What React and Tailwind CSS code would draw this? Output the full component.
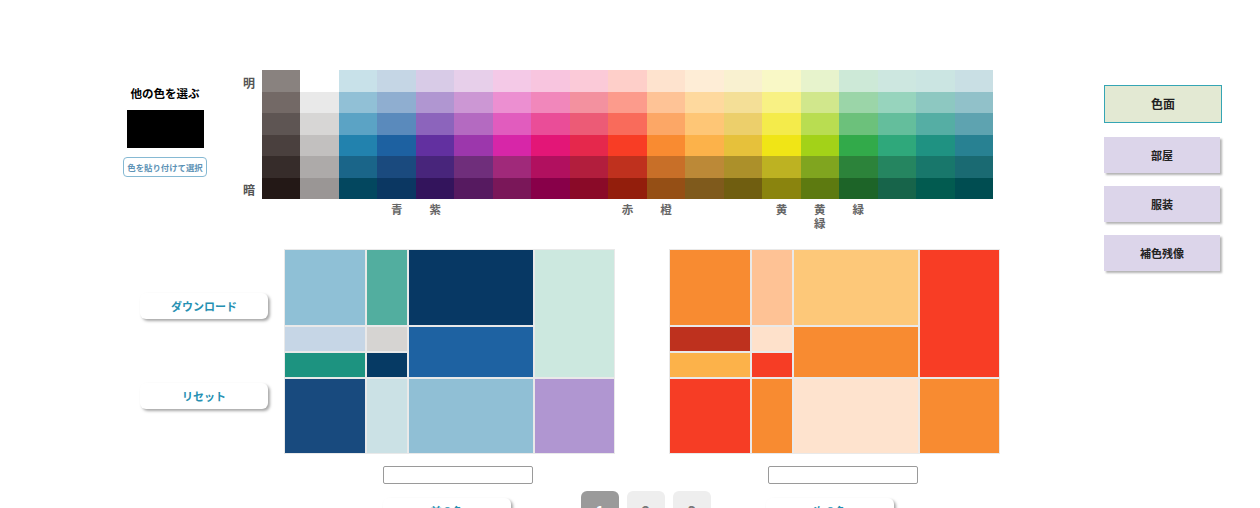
const palette = [
  ["bg-[#89827f]", "bg-[#736966]", "bg-[#5e5553]", "bg-[#4a403e]", "bg-[#362c2a]", "bg-[#231816]"],
  ["bg-[#ffffff]", "bg-[#e9e9e9]", "bg-[#d7d6d5]", "bg-[#c2c0bf]", "bg-[#adaaa9]", "bg-[#9a9695]"],
  ["bg-[#c8e1e9]", "bg-[#91c0d6]", "bg-[#5ba3c5]", "bg-[#2282ae]", "bg-[#1a6589]", "bg-[#03475f]"],
  ["bg-[#c5d6e5]", "bg-[#8faed0]", "bg-[#5a8abc]", "bg-[#1d61a1]", "bg-[#1a4a7e]", "bg-[#0b3762]"],
  ["bg-[#d8cbe7]", "bg-[#b096d1]", "bg-[#8c64bc]", "bg-[#6230a0]", "bg-[#48257b]", "bg-[#33145c]"],
  ["bg-[#e7cfea]", "bg-[#cc97d4]", "bg-[#b46ac1]", "bg-[#9c37ac]", "bg-[#6f2e7b]", "bg-[#561a60]"],
  ["bg-[#f4c9e7]", "bg-[#ec8fd1]", "bg-[#e15cbe]", "bg-[#d726a8]", "bg-[#a0297a]", "bg-[#7a1759]"],
  ["bg-[#f8c5df]", "bg-[#f187bb]", "bg-[#ea4d98]", "bg-[#e31677]", "bg-[#b1105f]", "bg-[#880049]"],
  ["bg-[#fbcad8]", "bg-[#f3919f]", "bg-[#ec5b76]", "bg-[#e5284c]", "bg-[#b21e3d]", "bg-[#8a0a28]"],
  ["bg-[#fecfc9]", "bg-[#fc9b8c]", "bg-[#f96b5b]", "bg-[#f83d25]", "bg-[#bf311e]", "bg-[#931e0c]"],
  ["bg-[#fee3ce]", "bg-[#fec396]", "bg-[#fca766]", "bg-[#f98b31]", "bg-[#c86f28]", "bg-[#954f15]"],
  ["bg-[#feedd6]", "bg-[#fed99e]", "bg-[#fec676]", "bg-[#fcb24a]", "bg-[#bc8937]", "bg-[#7f5a1c]"],
  ["bg-[#f9f1d0]", "bg-[#f4df97]", "bg-[#eccf6b]", "bg-[#e6c13b]", "bg-[#ac902a]", "bg-[#705e10]"],
  ["bg-[#f9f8c6]", "bg-[#f8f184]", "bg-[#f4eb4b]", "bg-[#f0e516]", "bg-[#bdb222]", "bg-[#8a840e]"],
  ["bg-[#e7f3cc]", "bg-[#d1e78c]", "bg-[#b9dd51]", "bg-[#a3d218]", "bg-[#80a51f]", "bg-[#5d7a10]"],
  ["bg-[#cde9d7]", "bg-[#9bd5a8]", "bg-[#6cc17b]", "bg-[#32aa4a]", "bg-[#2c833a]", "bg-[#1d6428]"],
  ["bg-[#cde7e0]", "bg-[#97d4bd]", "bg-[#64be9c]", "bg-[#2fa87b]", "bg-[#258560]", "bg-[#17644a]"],
  ["bg-[#cbe5e2]", "bg-[#8dc8c1]", "bg-[#55aea4]", "bg-[#1f9282]", "bg-[#18776b]", "bg-[#025b50]"],
  ["bg-[#c9dfe4]", "bg-[#91c1c9]", "bg-[#5ea3b0]", "bg-[#288192]", "bg-[#1a6a72]", "bg-[#004d51]"],
];

const hueLabels = [
  { cls: "col-start-4", text: ["青"] },
  { cls: "col-start-5", text: ["紫"] },
  { cls: "col-start-10", text: ["赤"] },
  { cls: "col-start-11", text: ["橙"] },
  { cls: "col-start-14", text: ["黄"] },
  { cls: "col-start-15", text: ["黄", "緑"] },
  { cls: "col-start-16", text: ["緑"] },
];

const leftTree = [
  "col-start-1 row-start-1 bg-[#8fc0d6]",
  "col-start-1 row-start-2 bg-[#c6d6e6]",
  "col-start-1 row-start-3 bg-[#1d9380]",
  "col-start-1 row-start-4 bg-[#184a7e]",
  "col-start-2 row-start-1 bg-[#52ae9f]",
  "col-start-2 row-start-2 bg-[#d6d4d2]",
  "col-start-2 row-start-3 bg-[#063a64]",
  "col-start-2 row-start-4 bg-[#cbe1e5]",
  "col-start-3 row-start-1 bg-[#073864]",
  "col-start-3 row-start-2 row-span-2 bg-[#1e62a2]",
  "col-start-3 row-start-4 bg-[#90bfd5]",
  "col-start-4 row-start-1 row-span-3 bg-[#cce8df]",
  "col-start-4 row-start-4 bg-[#b096d1]",
];

const rightTree = [
  "col-start-1 row-start-1 bg-[#f88b31]",
  "col-start-1 row-start-2 bg-[#be311e]",
  "col-start-1 row-start-3 bg-[#fcb24a]",
  "col-start-1 row-start-4 bg-[#f63d25]",
  "col-start-2 row-start-1 bg-[#fec295]",
  "col-start-2 row-start-2 bg-[#fee1cb]",
  "col-start-2 row-start-3 bg-[#f63d25]",
  "col-start-2 row-start-4 bg-[#f88b31]",
  "col-start-3 row-start-1 bg-[#fdc879]",
  "col-start-3 row-start-2 row-span-2 bg-[#f88b31]",
  "col-start-3 row-start-4 bg-[#fee3ce]",
  "col-start-4 row-start-1 row-span-3 bg-[#f83d25]",
  "col-start-4 row-start-4 bg-[#f88b31]",
];

function Treemap({ cells }) {
  return (
    <div className="grid grid-cols-[80px_40px_124px_79px] grid-rows-[75px_24px_24px_74px] gap-[2px] p-[1px] bg-[#e9e9e9] w-[331px] h-[205px]">
      {cells.map((c, i) => (
        <div key={i} className={c} />
      ))}
    </div>
  );
}

function WhiteButton({ children, className }) {
  return (
    <button
      className={
        "w-[128px] h-[26px] rounded-[6px] bg-white shadow-[2px_2px_3px_rgba(0,0,0,0.35)] text-[11px] font-bold text-[#2590b2] leading-none " +
        className
      }
    >
      {children}
    </button>
  );
}

function SideButton({ children, className }) {
  return (
    <button
      className={
        "w-[116px] h-[36px] bg-[#dcd5ea] shadow-[2px_2px_2px_rgba(0,0,0,0.3)] text-[11px] font-bold text-[#222] leading-none " +
        className
      }
    >
      {children}
    </button>
  );
}

export default function App() {
  return (
    <div className="w-[1260px] h-[508px] overflow-hidden bg-white flex font-['Noto_Sans_CJK_JP','Noto_Sans',sans-serif]">
      <div className="w-[1104px] shrink-0 flex flex-col">
        {/* top: picker + palette */}
        <div className="h-[249px] pt-[70px] flex shrink-0">
          <div className="ml-[123px] w-[84px] pt-[14px] flex flex-col items-center">
            <div className="text-[11.5px] leading-[18px] font-bold text-black whitespace-nowrap">
              他の色を選ぶ
            </div>
            <div className="mt-[8px] w-[77px] h-[38px] bg-black" />
            <button className="mt-[9px] w-[84px] h-[20px] rounded-[4px] border border-[#86b9d3] bg-white text-[8.4px] font-bold text-[#5d93b6] leading-none whitespace-nowrap">
              色を貼り付けて選択
            </button>
          </div>
          <div className="ml-[36px] w-[19px] h-[129px] pt-[6px] pb-[2px] flex flex-col justify-between text-[12px] leading-[14px] font-bold text-[#555]">
            <span>明</span>
            <span>暗</span>
          </div>
          <div className="w-[731px]">
            <div className="grid grid-cols-[repeat(19,minmax(0,1fr))] grid-rows-6 grid-flow-col h-[129px]">
              {palette.map((col, ci) =>
                col.map((c, ri) => <div key={ci + "-" + ri} className={c} />)
              )}
            </div>
            <div className="mt-[3px] grid grid-cols-[repeat(19,minmax(0,1fr))] text-[11.5px] leading-[14px] font-bold text-[#666] text-center">
              {hueLabels.map((l, i) => (
                <div key={i} className={l.cls + " row-start-1 flex flex-col items-center"}>
                  {l.text.map((t, j) => (
                    <span key={j}>{t}</span>
                  ))}
                </div>
              ))}
            </div>
          </div>
        </div>

        {/* bottom: treemaps */}
        <div className="flex shrink-0">
          <div className="ml-[140px] w-[128px] flex flex-col">
            <WhiteButton className="mt-[44px]">ダウンロード</WhiteButton>
            <WhiteButton className="mt-[64px]">リセット</WhiteButton>
          </div>
          <div className="ml-[16px] w-[331px] flex flex-col">
            <Treemap cells={leftTree} />
            <input
              type="text"
              className="mt-[12px] ml-[99px] w-[150px] h-[18px] border border-[#9a9a9a] rounded-[2px] bg-white"
            />
          </div>
          <div className="ml-[54px] w-[331px] flex flex-col">
            <Treemap cells={rightTree} />
            <input
              type="text"
              className="mt-[12px] ml-[99px] w-[150px] h-[18px] border border-[#9a9a9a] rounded-[2px] bg-white"
            />
          </div>
        </div>

        <div className="flex items-start mt-[7px] shrink-0">
          <WhiteButton className="ml-[383px] mt-[7px]">前の色</WhiteButton>
          <div className="ml-[70px] flex gap-[8px]">
            <div className="w-[38px] h-[38px] rounded-[6px] bg-[#9a9a9a] text-white text-[14px] font-bold flex items-center justify-center">
              1
            </div>
            <div className="w-[38px] h-[38px] rounded-[6px] bg-[#eeeeee] text-[#777] text-[14px] font-bold flex items-center justify-center">
              2
            </div>
            <div className="w-[38px] h-[38px] rounded-[6px] bg-[#eeeeee] text-[#777] text-[14px] font-bold flex items-center justify-center">
              3
            </div>
          </div>
          <WhiteButton className="ml-[55px] mt-[7px]">次の色</WhiteButton>
        </div>
      </div>

      {/* right column */}
      <div className="w-[118px] shrink-0 pt-[85px] flex flex-col items-start">
        <button className="w-[118px] h-[38px] bg-[#e3e9d3] border-[1.5px] border-[#35a5b4] text-[12px] font-bold text-[#222] leading-none">
          色面
        </button>
        <SideButton className="mt-[14px]">部屋</SideButton>
        <SideButton className="mt-[13px]">服装</SideButton>
        <SideButton className="mt-[13px]">補色残像</SideButton>
      </div>
    </div>
  );
}
